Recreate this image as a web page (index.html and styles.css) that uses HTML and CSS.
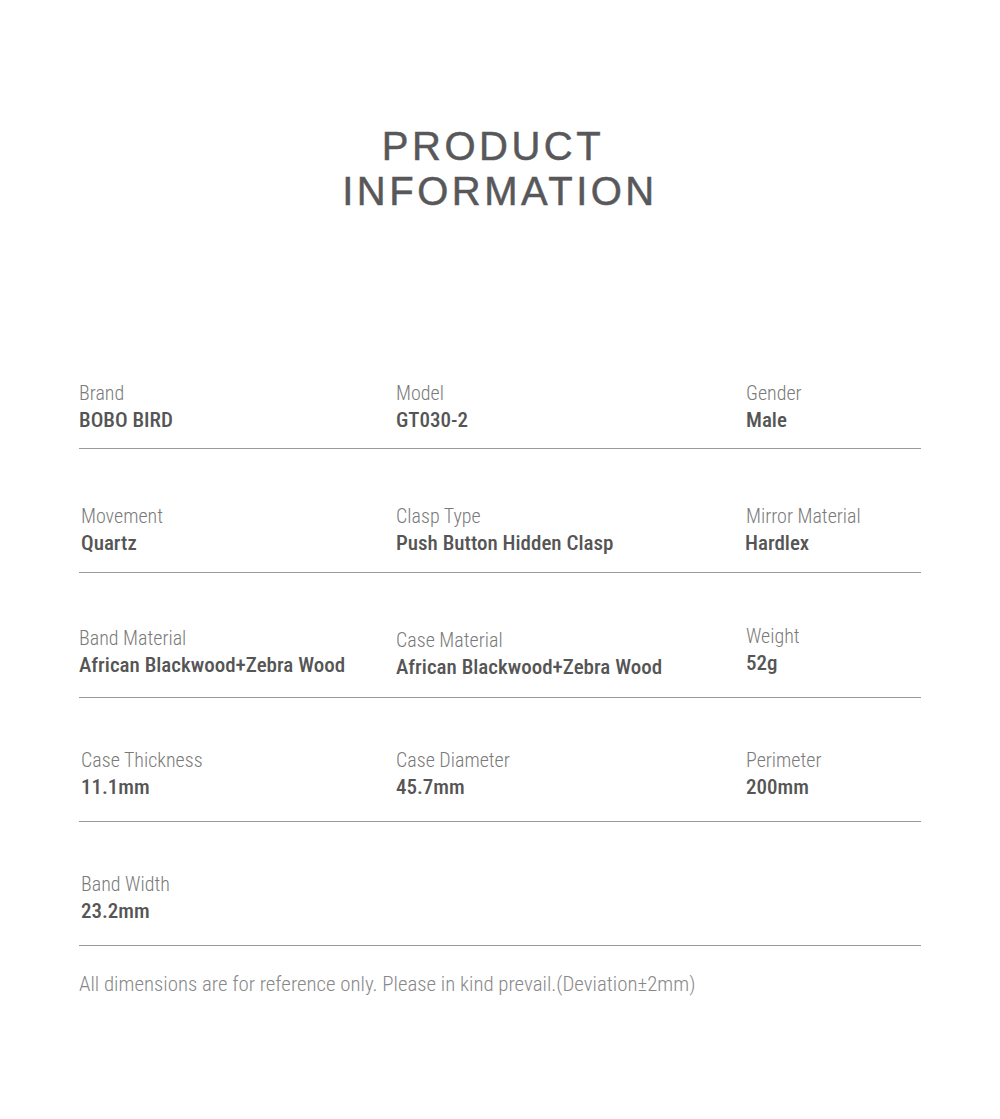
FILE: index.html
```html
<!DOCTYPE html>
<html lang="en">
<head>
<meta charset="utf-8">
<title>Product Information</title>
<link rel="stylesheet" href="styles.css">
</head>
<body>
<main class="page">
  <h1 class="title"><span class="line line-1">PRODUCT</span><span class="line">INFORMATION</span></h1>
  <section class="specs">
    <div class="row">
      <div class="cell"><div class="label">Brand</div><div class="value">BOBO BIRD</div></div>
      <div class="cell"><div class="label">Model</div><div class="value">GT030-2</div></div>
      <div class="cell"><div class="label">Gender</div><div class="value">Male</div></div>
    </div>
    <div class="row">
      <div class="cell nudge-r"><div class="label">Movement</div><div class="value">Quartz</div></div>
      <div class="cell"><div class="label">Clasp Type</div><div class="value">Push Button Hidden Clasp</div></div>
      <div class="cell"><div class="label">Mirror Material</div><div class="value nudge-l">Hardlex</div></div>
    </div>
    <div class="row">
      <div class="cell"><div class="label">Band Material</div><div class="value">African Blackwood+Zebra Wood</div></div>
      <div class="cell nudge-d"><div class="label">Case Material</div><div class="value">African Blackwood+Zebra Wood</div></div>
      <div class="cell nudge-u"><div class="label">Weight</div><div class="value">52g</div></div>
    </div>
    <div class="row">
      <div class="cell nudge-r"><div class="label">Case Thickness</div><div class="value">11.1mm</div></div>
      <div class="cell"><div class="label">Case Diameter</div><div class="value">45.7mm</div></div>
      <div class="cell"><div class="label">Perimeter</div><div class="value">200mm</div></div>
    </div>
    <div class="row">
      <div class="cell nudge-r"><div class="label">Band Width</div><div class="value">23.2mm</div></div>
      <div class="cell"></div>
      <div class="cell"></div>
    </div>
  </section>
  <p class="note">All dimensions are for reference only. Please in kind prevail.(Deviation±2mm)</p>
</main>
</body>
</html>
```

FILE: styles.css
```css
html, body {
  margin: 0;
  padding: 0;
  background: #ffffff;
}

.page {
  width: 1000px;
  min-height: 1119px;
  box-sizing: border-box;
  padding-top: 124px;
}

.title {
  margin: 0;
  display: flex;
  flex-direction: column;
  align-items: center;
  font-family: "Liberation Sans", Arial, sans-serif;
  font-weight: 400;
  font-size: 40px;
  line-height: 45px;
  letter-spacing: 3.5px;
  color: #58585a;
  -webkit-text-stroke: 0.5px #58585a;
}

.line {
  display: block;
  white-space: nowrap;
}

.line-1 {
  padding-right: 14px;
}

.specs {
  margin: 110px 79px 0 79px;
  width: 842px;
  display: flex;
  flex-direction: column;
}

.row {
  display: grid;
  grid-template-columns: 317px 350px 175px;
  padding: 54px 0 15px 0;
  border-bottom: 1px solid #9a9a9a;
}

.row:nth-child(1) { padding-top: 56px; padding-bottom: 14px; }
.row:nth-child(2) { padding-top: 54px; padding-bottom: 15px; }
.row:nth-child(3) { padding-top: 52px; padding-bottom: 18px; }
.row:nth-child(4) { padding-top: 49px; padding-bottom: 20px; }
.row:nth-child(5) { padding-top: 49px; padding-bottom: 20px; }

.cell {
  display: flex;
  flex-direction: column;
}

.label,
.value,
.note {
  font-family: "Roboto Condensed", "Roboto", sans-serif;
  line-height: 27px;
  white-space: nowrap;
}

.label {
  font-size: 20px;
  font-weight: 300;
  color: #7a7a7a;
}

.value {
  font-size: 21px;
  font-weight: 500;
  color: #555555;
}

.nudge-r { padding-left: 2px; }
.nudge-l { margin-left: -1px; }
.nudge-d { transform: translateY(2px); }
.nudge-u { transform: translateY(-2px); }

.note {
  margin: 25px 0 0 79px;
  font-size: 20.85px;
  font-weight: 300;
  color: #888888;
}
```
